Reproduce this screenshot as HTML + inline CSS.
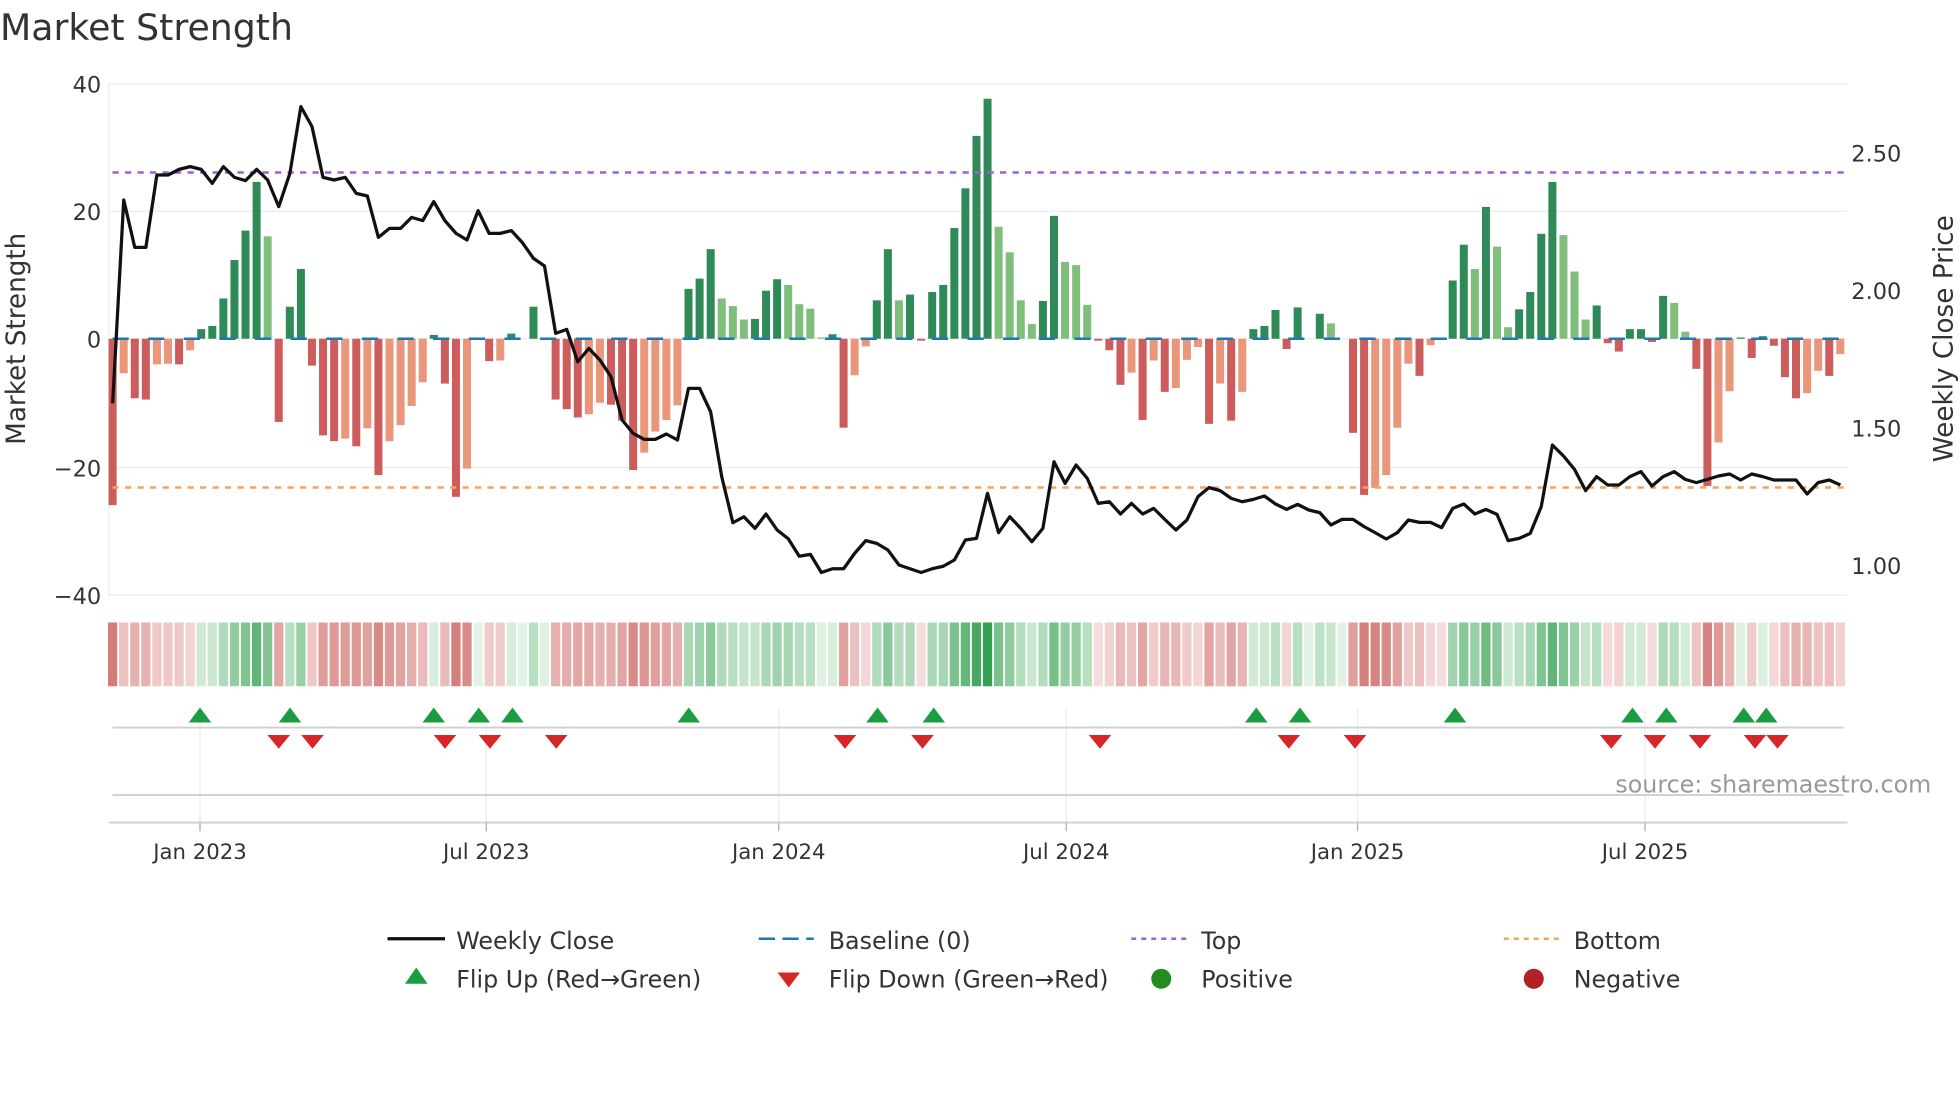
<!DOCTYPE html>
<html><head><meta charset="utf-8">
<style>
html,body{margin:0;padding:0;background:#fff;}
svg{display:block;}
text{font-family:"DejaVu Sans","Liberation Sans",sans-serif;fill:#333;}
</style></head>
<body>
<svg id="s" width="1960" height="1102" viewBox="0 0 1568 881.6" xmlns="http://www.w3.org/2000/svg">
<rect width="1568" height="882" fill="#fff"/>
<text x="0" y="32" font-size="29">Market Strength</text>
<g id="grid" stroke="#ececec" stroke-width="1">
<line x1="87" y1="67" x2="1478" y2="67"/>
<line x1="87" y1="169" x2="1478" y2="169"/>
<line x1="87" y1="271" x2="1478" y2="271"/>
<line x1="87" y1="374" x2="1478" y2="374"/>
<line x1="87" y1="476" x2="1478" y2="476"/>
<line x1="87" y1="67" x2="87" y2="476"/>
<line x1="160" y1="567" x2="160" y2="658"/>
<line x1="389" y1="567" x2="389" y2="658"/>
<line x1="623" y1="567" x2="623" y2="658"/>
<line x1="853" y1="567" x2="853" y2="658"/>
<line x1="1086" y1="567" x2="1086" y2="658"/>
<line x1="1316" y1="567" x2="1316" y2="658"/>
</g>
<g font-size="18" text-anchor="end">
<text x="81" y="74">40</text><text x="81" y="176">20</text><text x="81" y="278">0</text>
<text x="81" y="381">−20</text><text x="81" y="483">−40</text>
</g>
<g font-size="18">
<text x="1481" y="129">2.50</text><text x="1481" y="239">2.00</text>
<text x="1481" y="349">1.50</text><text x="1481" y="459">1.00</text>
</g>
<text transform="translate(20,271) rotate(-90)" font-size="21" text-anchor="middle">Market Strength</text>
<text transform="translate(1562,271) rotate(-90)" font-size="21" text-anchor="middle">Weekly Close Price</text>
<g id="bars"></g>
<line x1="90" y1="271" x2="1478" y2="271" stroke="#1f77b4" stroke-width="2" stroke-dasharray="13,15.5"/>
<line x1="90" y1="138" x2="1478" y2="138" stroke="#9d5fe0" stroke-width="2" stroke-dasharray="5,5"/>
<line x1="90" y1="390" x2="1478" y2="390" stroke="#f4a460" stroke-width="2" stroke-dasharray="5,5"/>
<polyline id="price" fill="none" stroke="#111" stroke-width="2.6" stroke-linejoin="round"/>
<g id="strip"></g>
<line x1="90" y1="582" x2="1475" y2="582" stroke="#cfcfcf" stroke-width="1.5"/>
<line x1="90" y1="636" x2="1475" y2="636" stroke="#cfcfcf" stroke-width="1.5"/>
<line x1="87" y1="658" x2="1478" y2="658" stroke="#cfcfcf" stroke-width="1.5"/>
<g id="marks"></g>
<g stroke="#aaa" stroke-width="1">
<line x1="160" y1="658" x2="160" y2="665"/><line x1="389" y1="658" x2="389" y2="665"/>
<line x1="623" y1="658" x2="623" y2="665"/><line x1="853" y1="658" x2="853" y2="665"/>
<line x1="1086" y1="658" x2="1086" y2="665"/><line x1="1316" y1="658" x2="1316" y2="665"/>
</g>
<g font-size="17" text-anchor="middle">
<text x="160" y="687">Jan 2023</text><text x="389" y="687">Jul 2023</text>
<text x="623" y="687">Jan 2024</text><text x="853" y="687">Jul 2024</text>
<text x="1086" y="687">Jan 2025</text><text x="1316" y="687">Jul 2025</text>
</g>
<text x="1545" y="634" font-size="19" text-anchor="end" style="fill:#999">source: sharemaestro.com</text>
<g font-size="19">
<line x1="310" y1="751" x2="356" y2="751" stroke="#111" stroke-width="2.6"/>
<text x="365" y="759">Weekly Close</text>
<line x1="607" y1="751" x2="651" y2="751" stroke="#1f77b4" stroke-width="2" stroke-dasharray="13,6"/>
<text x="663" y="759">Baseline (0)</text>
<line x1="905" y1="751" x2="949" y2="751" stroke="#9d5fe0" stroke-width="2" stroke-dasharray="4,4"/>
<text x="961" y="759">Top</text>
<line x1="1203" y1="751" x2="1247" y2="751" stroke="#f4a460" stroke-width="2" stroke-dasharray="4,4"/>
<text x="1259" y="759">Bottom</text>
<polygon points="324,787 342,787 333,774" fill="#1a9c3f"/>
<text x="365" y="790">Flip Up (Red→Green)</text>
<polygon points="622,778 640,778 631,790" fill="#d62728"/>
<text x="663" y="790">Flip Down (Green→Red)</text>
<circle cx="929" cy="783" r="8" fill="#228b22"/>
<text x="961" y="790">Positive</text>
<circle cx="1227" cy="783" r="8" fill="#b22222"/>
<text x="1259" y="790">Negative</text>
</g>
</svg>
<script>
var v=[-26,-5.4,-9.3,-9.5,-4,-3.9,-4,-1.8,1.5,2,6.3,12.3,16.9,24.5,16,-13,5,10.9,-4.2,-15.1,-16,-15.6,-16.8,-14,-21.3,-16,-13.5,-10.5,-6.8,0.6,-7,-24.7,-20.3,0,-3.5,-3.4,0.8,0,5,0.2,-9.5,-11,-12.3,-11.8,-10,-10.3,-12.8,-20.5,-17.8,-14.5,-12.7,-10.4,7.8,9.4,14,6.3,5.1,3,3.1,7.5,9.3,8.4,5.4,4.7,0.2,0.7,-13.9,-5.7,-1.2,6,14,6,6.9,-0.3,7.3,8.4,17.3,23.5,31.7,37.5,17.5,13.5,6,2.3,5.9,19.2,12,11.5,5.3,-0.3,-1.8,-7.2,-5.3,-12.7,-3.4,-8.3,-7.7,-3.3,-1.3,-13.3,-7,-12.8,-8.3,1.5,2,4.5,-1.6,4.9,0,3.9,2.4,0,-14.7,-24.4,-23.3,-21.3,-13.9,-3.9,-5.8,-1,-0.2,9.1,14.7,10.9,20.6,14.4,1.8,4.6,7.3,16.4,24.5,16.2,10.5,3,5.2,-0.7,-2,1.5,1.5,-0.5,6.7,5.6,1.1,-4.7,-23,-16.2,-8.2,0.2,-3,0.4,-1.1,-6,-9.3,-8.5,-5,-5.8,-2.4];
var p=[322.7,160,197.9,197.9,140,140,135.5,133.3,135.5,146.7,133.3,141.9,144.5,135.5,144,165.3,138.7,85.3,101.3,141.9,144,141.9,154.7,156.8,189.9,182.7,182.7,173.9,176.5,161.3,176.5,186.7,192,168.5,186.7,186.7,184.5,194.1,206.7,212.8,266.7,263.5,289.4,278.7,288,301.4,336,346.7,351.5,351.5,347.2,352,310.7,310.7,329.4,381.4,418.2,413.4,422.7,411.2,424,431,445,443.5,458,455,455,442.7,432.5,434.7,440,452,455,458,455,453,448,432,430.7,394.7,426.1,413.4,422.7,433.4,422.7,369.4,386.7,372,382.7,402.7,401.4,411.2,402.7,411.2,406.7,415.5,424,416,397.3,390.1,392.5,398.7,401.4,399.5,396.8,403.2,407.5,403.5,408,410.1,420,415.5,415.5,421.3,426.1,431.2,426.1,416,417.9,417.9,422.1,406.7,403.2,411.2,407.5,411.5,432.5,430.7,426.7,405.3,356,364.8,375.5,392.5,381.3,388,388,381.3,377.3,388.8,381.3,377.3,383.5,386.1,383.5,380.8,379.2,384,379.2,381.3,384,384,384,395.2,386.1,384,388];
var NS="http://www.w3.org/2000/svg";
function el(t,a,par){var e=document.createElementNS(NS,t);for(var k in a)e.setAttribute(k,a[k]);document.getElementById(par).appendChild(e);return e;}
function X(i){return 90.1+8.86*i;}
function mix(a,b,t){var r='#';for(var j=0;j<3;j++){var x=parseInt(a.substr(1+2*j,2),16),y=parseInt(b.substr(1+2*j,2),16);var c=Math.round(x+(y-x)*t).toString(16);if(c.length<2)c='0'+c;r+=c;}return r;}
var pts=[];
for(var i=0;i<v.length;i++){
 var x=X(i),val=v[i],prev=i?v[i-1]:0;
 var dark=(i==0)||(val*prev<=0)||(Math.abs(val)>=Math.abs(prev));
 var col=val>=0?(dark?'#2e8b57':'#7fbf7b'):(dark?'#cd5c5c':'#e9967a');
 if(Math.abs(val)>0.05){var h=Math.abs(val)*5.12;el('rect',{x:x-3.2,y:val>0?271-h:271,width:6.4,height:h,fill:col},'bars');}
 pts.push(x.toFixed(1)+','+p[i]);
 var c;
 if(val>=0){var t=Math.pow(Math.min(val/37,1),0.7);c=mix('#e2f3e5','#35a052',t);}
 else{var t=Math.pow(Math.min(-val/26,1),0.75);c=mix('#f7e1e1','#d27c78',t);}
 el('rect',{x:x-3.7,y:498,width:7.4,height:51,fill:c},'strip');
}
document.getElementById('price').setAttribute('points',pts.join(' '));
var up=[160,232,347,383,410,551,702,747,1005,1040,1164,1306,1333,1395,1413];
var dn=[223,250,356,392,445,676,738,880,1031,1084,1289,1324,1360,1404,1422];
up.forEach(function(x){el('polygon',{points:(x-9)+',578 '+(x+9)+',578 '+x+',566',fill:'#1a9c3f'},'marks');});
dn.forEach(function(x){el('polygon',{points:(x-9)+',588 '+(x+9)+',588 '+x+',599',fill:'#d62728'},'marks');});
</script>
</body></html>
